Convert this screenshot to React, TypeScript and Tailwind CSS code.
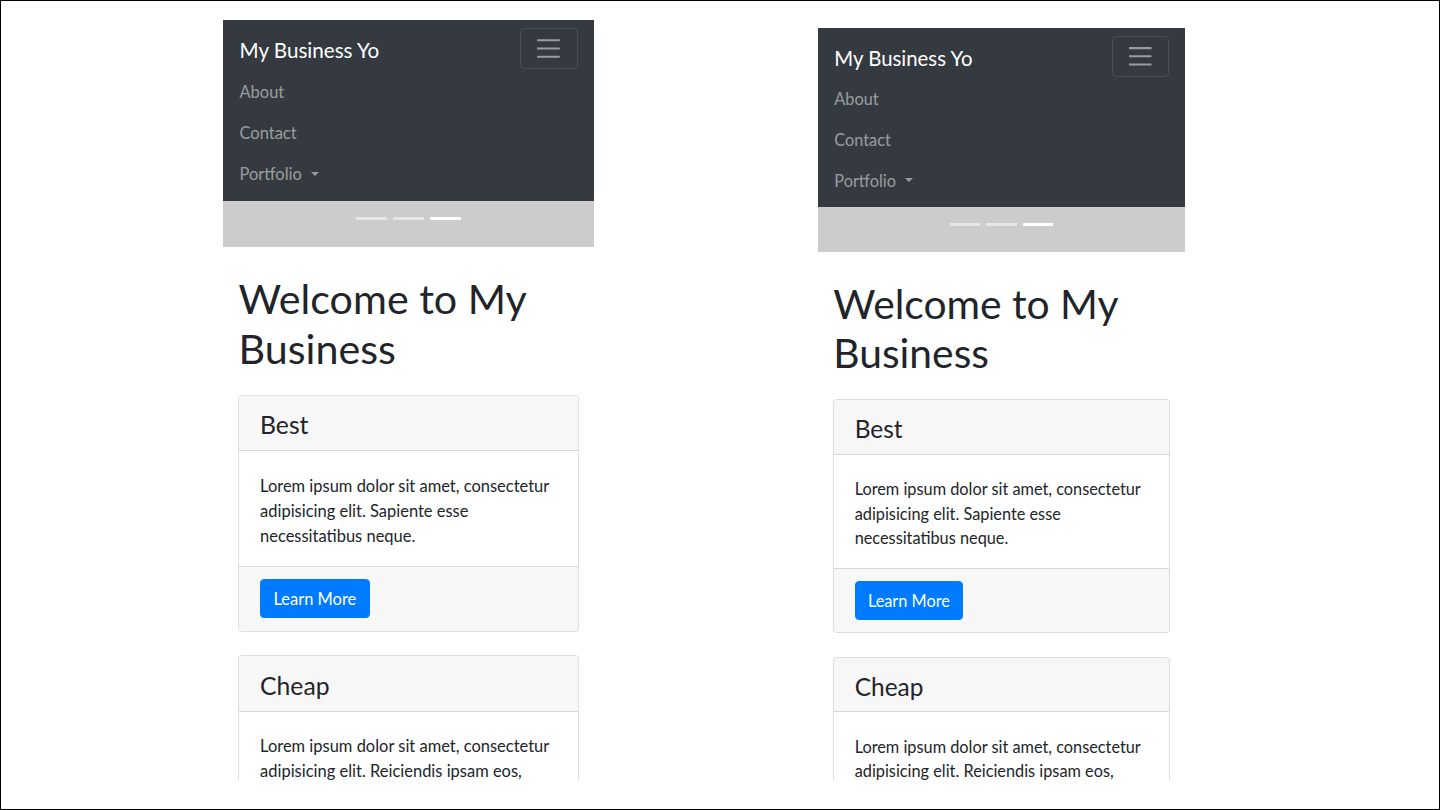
import { Fragment } from 'react';

const cards = [
  {
    title: 'Best',
    text: 'Lorem ipsum dolor sit amet, consectetur adipisicing elit. Sapiente esse necessitatibus neque.',
  },
  {
    title: 'Cheap',
    text: 'Lorem ipsum dolor sit amet, consectetur adipisicing elit. Reiciendis ipsam eos, voluptatibus perspiciatis natus commodi similique totam praesentium molestiae.',
  },
  {
    title: 'Easy',
    text: 'Lorem ipsum dolor sit amet, consectetur adipisicing elit. Quae minus, porro ipsam dolorem.',
  },
];

function Card({ title, text }: { title: string; text: string }) {
  return (
    <div className="mb-[23px] rounded-[4px] border border-black/[.125] bg-white">
      <div className="rounded-t-[3px] border-b border-black/[.125] bg-black/[.03] px-5 pt-[14px] pb-[10px]">
        <h4 className="text-[24px] leading-[28.8px] font-normal text-[#212529]">{title}</h4>
      </div>
      <div className="px-5 pt-[22px] pb-[17px]">
        <p className="text-base leading-6 text-[#212529]">{text}</p>
      </div>
      <div className="rounded-b-[3px] border-t border-black/[.125] bg-black/[.03] px-5 py-3">
        <button className="rounded-[4px] border border-[#007bff] bg-[#007bff] px-3 pt-[7px] pb-[5px] text-base leading-6 text-white">
          Learn More
        </button>
      </div>
    </div>
  );
}

// one phone-width page, drawn at 360px and zoomed by the wrapper
function Phone() {
  return (
    <div className="w-[360px] bg-white">
      {/* Navbar */}
      <nav className="bg-[#343a40] px-4 py-2">
        <div className="flex items-center justify-between">
          <span className="pt-[7px] pb-[3px] text-[20px] leading-[30px] text-white">My Business Yo</span>
          <button
            className="flex h-[40px] w-[56px] items-center justify-center rounded-[4px] border border-white/10"
            aria-label="Toggle navigation"
          >
            <svg width="30" height="30" viewBox="0 0 30 30">
              <path d="M4 7h22M4 15h22M4 23h22" stroke="rgba(255,255,255,0.5)" strokeWidth="2" />
            </svg>
          </button>
        </div>
        <ul>
          <li><a className="block pt-[10px] pb-[6px] text-base leading-6 text-white/50">About</a></li>
          <li><a className="block pt-[10px] pb-[6px] text-base leading-6 text-white/50">Contact</a></li>
          <li>
            <a className="block pt-[10px] pb-[6px] text-base leading-6 text-white/50">
              Portfolio
              <span className="ml-[9px] inline-block align-[0.27em] border-x-[0.29em] border-t-[0.29em] border-b-0 border-x-transparent border-t-current" />
            </a>
          </li>
        </ul>
      </nav>

      {/* Carousel */}
      <div className="h-[44px] bg-[#cccccc] pt-[15px]">
        <div className="flex justify-center gap-[6px]">
          <span className="h-[3px] w-[30px] bg-white/50" />
          <span className="h-[3px] w-[30px] bg-white/50" />
          <span className="h-[3px] w-[30px] bg-white" />
        </div>
      </div>

      {/* Content */}
      <div className="px-[15px]">
        <h1 className="mt-[27px] mb-[21px] text-[40px] leading-[48px] font-normal text-[#212529]">Welcome to My Business</h1>
        {cards.map((c) => (
          <Fragment key={c.title}>
            <Card title={c.title} text={c.text} />
          </Fragment>
        ))}
      </div>
    </div>
  );
}

export default function App() {
  return (
    <div className="h-[810px] w-[1440px] overflow-hidden border border-black bg-white font-['Lato',sans-serif]">
      <div className="flex items-start pl-[222px]">
        <div className="mt-[19px] h-[761px] w-[371px] overflow-hidden">
          <div className="[zoom:1.0306]">
            <Phone />
          </div>
        </div>
        <div className="ml-[224px] mt-[27px] h-[753px] w-[367px] overflow-hidden">
          <div className="[zoom:1.0194]">
            <Phone />
          </div>
        </div>
      </div>
    </div>
  );
}
